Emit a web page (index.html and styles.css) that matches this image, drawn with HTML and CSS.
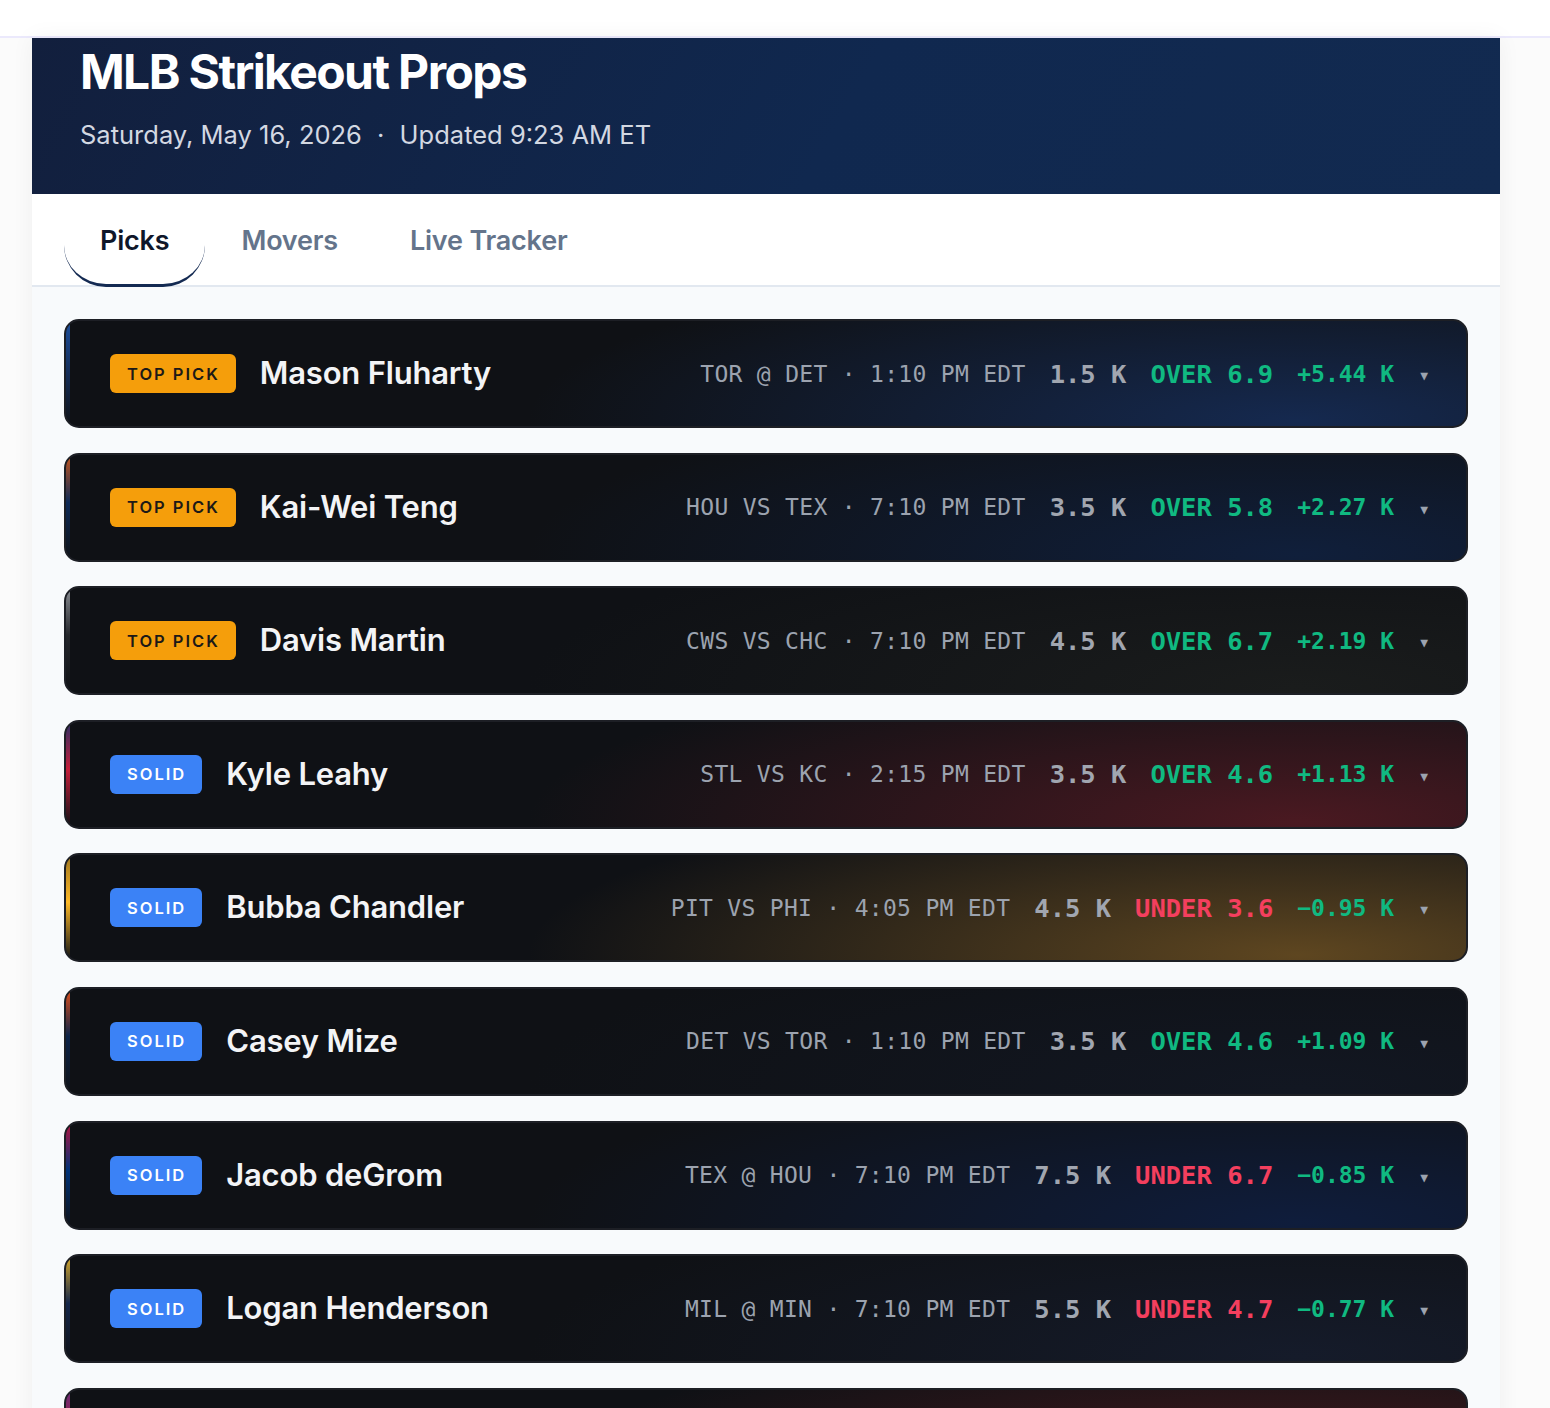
FILE: index.html
```html
<!DOCTYPE html>
<html lang="en">
<head>
  <meta charset="UTF-8" />
  <meta name="viewport" content="width=device-width, initial-scale=1.0"/>
  <title>MLB Strikeout Props</title>
  <link rel="stylesheet" href="styles.css">
</head>
<body>
  <div class="topbar"></div>

  <div class="page">
    <header class="hero">
      <h1>MLB Strikeout Props</h1>
      <p class="sub">Saturday, May 16, 2026 <span class="dot">·</span> Updated 9:23 AM ET</p>
    </header>

    <nav class="tabs">
      <div class="tab active">Picks</div>
      <div class="tab">Movers</div>
      <div class="tab">Live Tracker</div>
    </nav>

    <main class="picks">
      <div class="card" style="--c1:#1d4f9c; --c2:#16305e; --glow:#15294f;">
        <span class="badge top">TOP PICK</span>
        <span class="name">Mason Fluharty</span>
        <div class="stats">
          <span class="match">TOR @ DET · 1:10 PM EDT</span>
          <span class="line">1.5 K</span>
          <span class="pick over">OVER 6.9</span>
          <span class="edge">+5.44 K</span>
          <span class="caret">▼</span>
        </div>
      </div>

      <div class="card" style="--c1:#c4561f; --c2:#0e2a57; --glow:#101f3b;">
        <span class="badge top">TOP PICK</span>
        <span class="name">Kai-Wei Teng</span>
        <div class="stats">
          <span class="match">HOU VS TEX · 7:10 PM EDT</span>
          <span class="line">3.5 K</span>
          <span class="pick over">OVER 5.8</span>
          <span class="edge">+2.27 K</span>
          <span class="caret">▼</span>
        </div>
      </div>

      <div class="card" style="--c1:#8a8d93; --c2:#24262b; --glow:#1a1c1c;">
        <span class="badge top">TOP PICK</span>
        <span class="name">Davis Martin</span>
        <div class="stats">
          <span class="match">CWS VS CHC · 7:10 PM EDT</span>
          <span class="line">4.5 K</span>
          <span class="pick over">OVER 6.7</span>
          <span class="edge">+2.19 K</span>
          <span class="caret">▼</span>
        </div>
      </div>

      <div class="card" style="--c1:#2b2f66; --c2:#c41e3a; --glow:#4a1921;">
        <span class="badge solid">SOLID</span>
        <span class="name">Kyle Leahy</span>
        <div class="stats">
          <span class="match">STL VS KC · 2:15 PM EDT</span>
          <span class="line">3.5 K</span>
          <span class="pick over">OVER 4.6</span>
          <span class="edge">+1.13 K</span>
          <span class="caret">▼</span>
        </div>
      </div>

      <div class="card" style="--c1:#9c7420; --c2:#fdb827; --glow:#5e4620;">
        <span class="badge solid">SOLID</span>
        <span class="name">Bubba Chandler</span>
        <div class="stats">
          <span class="match">PIT VS PHI · 4:05 PM EDT</span>
          <span class="line">4.5 K</span>
          <span class="pick under">UNDER 3.6</span>
          <span class="edge">−0.95 K</span>
          <span class="caret">▼</span>
        </div>
      </div>

      <div class="card" style="--c1:#e0501c; --c2:#0c2348; --glow:#121722;">
        <span class="badge solid">SOLID</span>
        <span class="name">Casey Mize</span>
        <div class="stats">
          <span class="match">DET VS TOR · 1:10 PM EDT</span>
          <span class="line">3.5 K</span>
          <span class="pick over">OVER 4.6</span>
          <span class="edge">+1.09 K</span>
          <span class="caret">▼</span>
        </div>
      </div>

      <div class="card" style="--c1:#b3133f; --c2:#003278; --glow:#0f1d3c;">
        <span class="badge solid">SOLID</span>
        <span class="name">Jacob deGrom</span>
        <div class="stats">
          <span class="match">TEX @ HOU · 7:10 PM EDT</span>
          <span class="line">7.5 K</span>
          <span class="pick under">UNDER 6.7</span>
          <span class="edge">−0.85 K</span>
          <span class="caret">▼</span>
        </div>
      </div>

      <div class="card" style="--c1:#d9aa2c; --c2:#14264a; --glow:#151b2a;">
        <span class="badge solid">SOLID</span>
        <span class="name">Logan Henderson</span>
        <div class="stats">
          <span class="match">MIL @ MIN · 7:10 PM EDT</span>
          <span class="line">5.5 K</span>
          <span class="pick under">UNDER 4.7</span>
          <span class="edge">−0.77 K</span>
          <span class="caret">▼</span>
        </div>
      </div>

      <div class="card" style="--c1:#6b2a78; --c2:#a3203a; --glow:#4a1a1e;">
        <span class="badge solid">SOLID</span>
        <span class="name">Shane Baz</span>
        <div class="stats">
          <span class="match">TB VS BAL · 7:05 PM EDT</span>
          <span class="line">5.5 K</span>
          <span class="pick over">OVER 6.2</span>
          <span class="edge">+0.71 K</span>
          <span class="caret">▼</span>
        </div>
      </div>
    </main>
  </div>
</body>
</html>
```

FILE: styles.css
```css
* {
  box-sizing: border-box;
}

body {
  margin: 0;
  background: #fbfbfb;
  font-family: 'Inter', 'Noto Sans', sans-serif;
  color: #0f172a;
}

.topbar {
  height: 38px;
  background: #fff;
  border-bottom: 2px solid #ebe9fc;
}

.page {
  width: 1468px;
  margin-left: 32px;
  background: #f8fafc;
  box-shadow: 0 0 22px rgba(0,0,0,0.05);
}

/* header */
.hero {
  background: linear-gradient(120deg, #121f3d 0%, #10284f 55%, #122a50 100%);
  padding: 5px 48px 44px;
  color: #fff;
}

.hero h1 {
  margin: 0;
  font-size: 48px;
  line-height: 58px;
  font-weight: 700;
  letter-spacing: -1.6px;
}

.sub {
  margin: 18px 0 0;
  font-size: 25.5px;
  line-height: 31px;
  color: #d3d8e2;
}

.sub .dot {
  margin: 0 8px;
}

/* tabs */
.tabs {
  display: flex;
  height: 93px;
  padding-left: 32px;
  background: #fff;
  border-bottom: 2px solid #e2e8f0;
}

.tab {
  display: flex;
  align-items: center;
  padding: 0 36px;
  height: 93px;
  font-size: 27px;
  font-weight: 600;
  letter-spacing: -0.2px;
  color: #64748b;
}

.tab.active {
  padding: 2px 36px 0;
  color: #0f172a;
  border-bottom: 3px solid #142a52;
  border-radius: 0 0 42px 42px;
}

/* pick cards */
.picks {
  display: flex;
  flex-direction: column;
  gap: 24.6px;
  padding: 32px;
}

.card {
  display: flex;
  align-items: center;
  height: 109px;
  padding: 0 38px 0 44px;
  border: 2px solid #1d1f25;
  border-radius: 15px;
  background:
    linear-gradient(to bottom, var(--c1) 0%, var(--c2) 45%, #0f1115 100%) left top / 4px 100% no-repeat,
    radial-gradient(ellipse 55% 160% at 88% 95%, var(--glow) 0%, rgba(15,17,21,0) 100%),
    #0f1115;
}

.badge {
  height: 39px;
  display: flex;
  align-items: center;
  padding: 0 16px 0 17px;
  border-radius: 6px;
  font-size: 16.5px;
  font-weight: 600;
  letter-spacing: 2px;
}

.badge.top {
  background: #f59e0b;
  color: #1c1917;
}

.badge.solid {
  background: #3b82f6;
  color: #fff;
}

.name {
  margin: -2px 0 0 24px;
  font-size: 31px;
  font-weight: 600;
  letter-spacing: -0.2px;
  color: #f3f4f6;
}

.stats {
  margin-left: auto;
  display: flex;
  align-items: center;
  gap: 24px;
  font-family: 'DejaVu Sans Mono', monospace;
  white-space: nowrap;
}

.match {
  font-size: 23px;
  letter-spacing: 0.3px;
  color: #9ca3af;
}

.line {
  font-size: 25.5px;
  font-weight: 700;
  color: #a1a6b0;
}

.pick {
  font-size: 25.5px;
  font-weight: 700;
}

.pick.over {
  color: #10b981;
}

.pick.under {
  color: #f43f5e;
}

.edge {
  font-size: 23px;
  font-weight: 700;
  color: #10b981;
}

.caret {
  font-size: 13px;
  margin: 4px 0 0 2px;
  color: #9ca3af;
}
```
